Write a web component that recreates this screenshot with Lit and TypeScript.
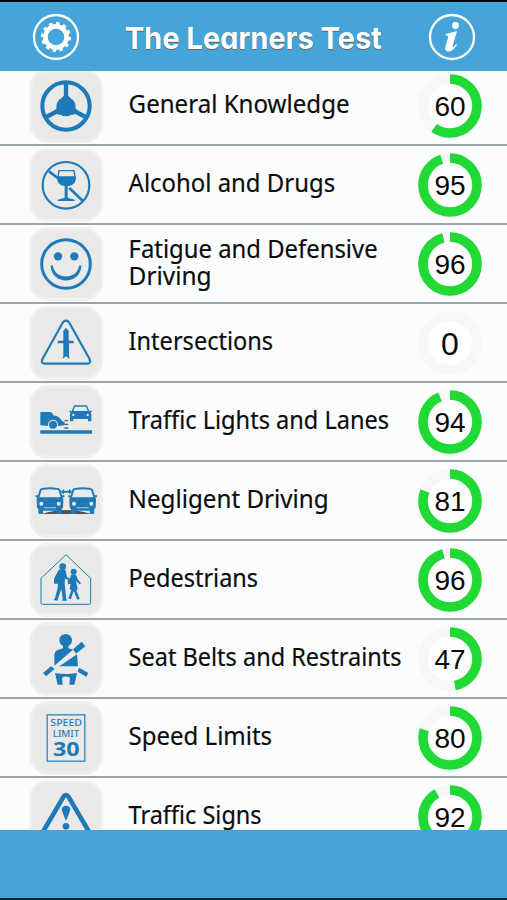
import { LitElement, html, svg, css, SVGTemplateResult } from "lit";
import { customElement, property } from "lit/decorators.js";

interface Line {
  text: string;
  width: number;
}
interface Topic {
  lines: Line[];
  score: number;
  icon: string;
}

const TOPICS: Topic[] = [
  { lines: [{ text: "General Knowledge", width: 221 }], score: 60, icon: "wheel" },
  { lines: [{ text: "Alcohol and Drugs", width: 206.5 }], score: 95, icon: "drink" },
  {
    lines: [
      { text: "Fatigue and Defensive", width: 249 },
      { text: "Driving", width: 83 },
    ],
    score: 96,
    icon: "smile",
  },
  { lines: [{ text: "Intersections", width: 144.5 }], score: 0, icon: "crossing" },
  { lines: [{ text: "Traffic Lights and Lanes", width: 260.5 }], score: 94, icon: "lanes" },
  { lines: [{ text: "Negligent Driving", width: 200 }], score: 81, icon: "cars" },
  { lines: [{ text: "Pedestrians", width: 129.5 }], score: 96, icon: "walkers" },
  { lines: [{ text: "Seat Belts and Restraints", width: 273 }], score: 47, icon: "belt" },
  { lines: [{ text: "Speed Limits", width: 143.5 }], score: 80, icon: "speed" },
  { lines: [{ text: "Traffic Signs", width: 133 }], score: 92, icon: "warning" },
];

const car = (dx: number) => svg`<g transform="translate(${dx} 0)">
  <path class="fill" fill-rule="evenodd" d="M-38 352 L-31 329 Q-29 324 -23 324 Q0 320 23 324 Q29 324 31 329 L38 352 Q40 355 40 360 L39 384 L35 386 L35 399 Q35 402 30 402 L24 402 Q21 402 21 398 L21 392 L-21 392 L-21 398 Q-21 402 -24 402 L-30 402 Q-35 402 -35 399 L-35 386 L-39 384 L-40 360 Q-40 355 -38 352 Z M-32 352 L32 352 L26 332 Q25 329 21 329 Q0 326 -21 329 Q-25 329 -26 332 Z"/>
  <circle class="hole" cx="-26" cy="371" r="6"/><circle class="hole" cx="26" cy="371" r="6"/>
  <path class="fill" d="M-43 346h7v6h-7zM36 346h7v6h-7z"/>
  <path class="gap" d="M-18 383H18"/>
</g>`;

// Every glyph sits on a 222-unit tile whose middle is x = 137, y = cy.
const ICONS: Record<string, { cy: number; art: SVGTemplateResult }> = {
  wheel: {
    cy: 123,
    art: svg`<circle class="ring" cx="137" cy="123" r="71" stroke-width="12"/>
      <path class="line" stroke-width="13" d="M137 54V123M78 156L137 125L196 156"/>
      <circle class="fill" cx="137" cy="125" r="29"/>
      <path class="fill" d="M120 104L130 92H144L154 104L165 130L173 138L164 148Q137 154 110 148L101 138L109 130Z"/>`,
  },
  drink: {
    cy: 360,
    art: svg`<circle class="ring" cx="137" cy="361" r="70" stroke-width="6.5"/>
      <path class="line" stroke-width="8" d="M86 319L112 339M147 369L187 407"/>
      <path class="ring" stroke-width="4" d="M113 337L116 317H161L164 337"/>
      <path class="fill" d="M110 334H167Q169 362 142 364V398L163 404V408H112V404L133 398V364Q108 361 110 334Z"/>`,
  },
  smile: {
    cy: 126,
    art: svg`<circle class="ring" cx="137" cy="126" r="73" stroke-width="9"/>
      <circle class="fill" cx="113" cy="103" r="12.5"/><circle class="fill" cx="162" cy="103" r="12.5"/>
      <path class="fill" d="M91 132Q94 127 98 132C104 174 170 174 176 132Q180 127 183 132C180 190 94 190 91 132Z"/>`,
  },
  crossing: {
    cy: 363,
    art: svg`<path class="ring" stroke-width="6.5" stroke-linejoin="round" d="M127 302Q137 290 147 302L208 412Q213 424 202 425H72Q61 424 66 412Z"/>
      <path class="fill" d="M137 317L147 329H145V356H160V364H146V402L148 411L137 403L127 411L129 402V364H112V356H129V329H127Z"/>`,
  },
  lanes: {
    cy: 126,
    art: svg`<path class="fill" d="M60 151H215V161H60Z"/>
      <path class="fill" d="M60 96H91Q96 97 99 106Q119 110 125 123L133 127V136L110 138H85L60 136Z"/>
      <circle class="hole" cx="98" cy="134" r="15"/><circle class="fill" cx="98" cy="134" r="12"/>
      <path class="dash" d="M138 120V148"/>
      <path class="fill" fill-rule="evenodd" d="M154 94L160 79Q161 76 165 76H196Q200 76 201 79L207 94Q213 97 213 104V124H203V117H159V124H149V104Q149 97 154 94ZM159 93H202L197 80H164Z"/>
      <circle class="hole" cx="159" cy="105" r="3.5"/><circle class="hole" cx="202" cy="105" r="3.5"/>
      <path class="fill" d="M147 92h6v5h-6zM208 92h6v5h-6z"/>`,
  },
  cars: {
    cy: 363,
    art: svg`<path class="road" d="M64 402Q138 378 212 402Z"/>
      ${car(89)}${car(187)}
      <path class="fill" d="M121 335L131 327V332H146V327L156 335L146 343V338H131V343Z"/>`,
  },
  walkers: {
    cy: 126,
    art: svg`<path class="ring" stroke-width="3" d="M137 50L211 121V195Q211 199 207 199H66Q62 199 62 195V121Z"/>
      <circle class="fill" cx="127" cy="86" r="10"/>
      <path class="fill" d="M115 96Q126 91 136 98L140 117L150 122L148 127L134 122L133 138L138 184L140 188H126L127 181L123 152L111 188L100 186L104 181L112 150L113 137H101V123L105 115Z"/>
      <circle class="fill" cx="160" cy="101" r="9"/>
      <path class="fill" d="M152 110Q161 107 168 112L172 124L182 136L178 139L167 129L172 153L168 157L178 183L171 185L160 159L152 183L144 182L153 157L148 153L151 137L143 139L142 127L148 124Z"/>`,
  },
  belt: {
    cy: 363,
    art: svg`<circle class="fill" cx="136" cy="307" r="19"/>
      <path class="fill" d="M128 324H144V331L158 335L102 383V350Q103 340 111 337L128 331Z"/>
      <path class="fill" d="M170 349L173 385H117Z"/>
      <path class="fill" d="M184 311L195 325L167 347L158 334Z"/>
      <path class="fill" d="M92 385L103 393L77 415L68 405Z"/>
      <path class="fill" d="M176 389L204 405L198 416L172 401Z"/>
      <path class="fill" d="M104 405Q137 411 170 405L162 440H147L149 419Q137 412 125 419L127 440H112Z"/>`,
  },
  speed: {
    cy: 129,
    art: svg`<rect class="ring" x="80.500" y="59.500" width="113" height="139" stroke-width="3.5"/>
      <text class="sign" x="90" y="94" font-size="28" textLength="95" lengthAdjust="spacingAndGlyphs">SPEED</text>
      <text class="sign" x="97" y="127" font-size="28" textLength="80" lengthAdjust="spacingAndGlyphs">LIMIT</text>
      <text class="sign bold" x="98" y="184" font-size="61" textLength="80" lengthAdjust="spacingAndGlyphs">30</text>`,
  },
  warning: {
    cy: 366,
    art: svg`<path class="ring" stroke-width="14" stroke-linejoin="round" d="M128 308Q137 293 146 308L214 424H60Z"/>
      <path class="fill" d="M124 343Q125 332 137 332Q149 332 150 343Q148 352 138 376H136Q126 352 124 343Z"/>
      <circle class="fill" cx="137" cy="394" r="10"/>`,
  },
};

@customElement("topic-icon")
export class TopicIcon extends LitElement {
  @property() name = "wheel";

  static styles = css`
    :host { display: block; flex: none; width: 74px; height: 74px; }
    svg { display: block; width: 100%; height: 100%; }
    .edge { fill: #eeefee; }
    .face { fill: #e9e9e8; stroke: #f1f1f0; stroke-width: 2.500; }
    .fill { fill: #1d79b8; }
    .hole { fill: #e9e9e8; }
    .ring { fill: none; stroke: #1d79b8; }
    .line { fill: none; stroke: #1d79b8; }
    .gap { fill: none; stroke: #8dbbd9; stroke-width: 4; }
    .dash { fill: none; stroke: #44647c; stroke-width: 11; stroke-dasharray: 4 7; }
    .road { fill: #56504d; }
    .sign { fill: #1d79b8; font-family: "Noto Sans", sans-serif; font-weight: 500; }
    .bold { font-weight: 700; }
  `;

  render() {
    const { cy, art } = ICONS[this.name];
    const top = cy - 111;
    return html`<svg viewBox="26 ${top} 222 222" aria-hidden="true">
      <rect class="edge" x="27" y=${top + 1} width="220" height="220" rx="54"></rect>
      <rect class="face" x="34" y=${top + 8} width="206" height="205" rx="46"></rect>
      ${art}
    </svg>`;
  }
}

@customElement("score-ring")
export class ScoreRing extends LitElement {
  @property({ type: Number }) value = 0;

  static styles = css`
    :host { display: block; flex: none; width: 64px; height: 64px; }
    svg { display: block; width: 100%; height: 100%; }
    .track { fill: #fefefe; stroke: #f7f7f7; stroke-width: 9.600; }
    .arc { fill: none; stroke: #20d935; stroke-width: 9.600; }
    .num { font: 28px "Liberation Sans", Arial, sans-serif; fill: #0a0a0a; text-anchor: middle; }
    .zero { font-size: 32px; }
  `;

  render() {
    return html`<svg viewBox="0 0 64 64">
      <circle class="track" cx="32" cy="32" r="27"></circle>
      ${this.value > 0
        ? svg`<circle class="arc" cx="32" cy="32" r="27" pathLength="100" transform="rotate(-90 32 32)" stroke-dasharray="${this.value} 100"/>`
        : null}
      <text class="num ${this.value === 0 ? "zero" : ""}" x="32" y=${this.value === 0 ? 43.5 : 42}>${this.value}</text>
    </svg>`;
  }
}

@customElement("app-root")
export class AppRoot extends LitElement {
  static styles = css`
    :host {
      display: flex;
      flex-direction: column;
      box-sizing: border-box;
      height: 900px;
      overflow: hidden;
      border-top: 2px solid #05080b;
      border-bottom: 2px solid #10212c;
      background: #fafcfd;
    }
    .bar {
      flex: none;
      box-sizing: border-box;
      height: 69px;
      display: flex;
      align-items: center;
      justify-content: space-between;
      padding: 0 31px 0 32px;
      background: #46a5d8;
    }
    .button { display: block; width: 48px; height: 48px; }
    .outline { fill: none; stroke: #fff; stroke-width: 2.300; }
    .white { fill: #fff; }
    .cog { fill: none; stroke: #fff; stroke-width: 4.600; }
    .teeth { fill: none; stroke: #fff; stroke-width: 4; stroke-dasharray: 3.400 3.400; }
    .title { width: 262px; height: 48px; overflow: visible; }
    .title-text {
      font: 700 30.500px Inter, "Open Sans", sans-serif;
      font-feature-settings: "cv11", "ss03";
      fill: #fff;
      filter: drop-shadow(0.500px 1.500px 0.500px #6d625c);
    }
    .list { flex: 1; min-height: 0; overflow: hidden; }
    .rows { margin: -4px 0 0; padding: 0; list-style: none; }
    .row {
      box-sizing: border-box;
      height: 79px;
      display: flex;
      align-items: center;
      padding: 1px 25px 0 29px;
      border-bottom: 2px solid #9ba5a8;
    }
    .label { flex: 1; min-width: 0; height: 76px; margin-left: 25px; overflow: visible; }
    .text {
      font: 25.500px "Noto Sans", "Open Sans", sans-serif;
      fill: #0c0c0c;
      stroke: #0c0c0c;
      stroke-width: 0.200;
    }
    .foot { flex: none; height: 68px; background: #46a5d8; }
  `;

  render() {
    return html`
      <header class="bar">
        <svg class="button" viewBox="0 0 48 48" role="img" aria-label="Settings">
          <circle class="outline" cx="24" cy="24" r="22"></circle>
          <circle class="cog" cx="24" cy="24" r="10.600"></circle>
          <circle class="teeth" cx="24" cy="24" r="13" pathLength="81.600"></circle>
        </svg>
        <svg class="title" viewBox="0 0 262 48">
          <text class="title-text" x="2" y="35.500" textLength="257" lengthAdjust="spacingAndGlyphs">The Learners Test</text>
        </svg>
        <svg class="button" viewBox="0 0 48 48" role="img" aria-label="Information">
          <circle class="outline" cx="24" cy="24" r="22"></circle>
          <circle class="white" cx="27.500" cy="12.500" r="3.400"></circle>
          <path class="white" d="M17.500 21Q22.500 19.800 29 18L24.800 32.500Q24.300 35 25.300 34.300Q26.700 33 28 31L29 31.800Q25 38.500 20.500 38.500Q16.500 38 17.300 34.200L20.200 24Q20.700 22 17.500 22.300Z"></path>
        </svg>
      </header>
      <main class="list">
        <ul class="rows">
          ${TOPICS.map(
            (t) => html`<li class="row">
              <topic-icon name=${t.icon}></topic-icon>
              <svg class="label">
                ${t.lines.map(
                  (l, i) => svg`<text class="text" x="0.6" y=${(t.lines.length > 1 ? 31.5 : 45) + i * 27} textLength=${l.width} lengthAdjust="spacingAndGlyphs">${l.text}</text>`
                )}
              </svg>
              <score-ring .value=${t.score}></score-ring>
            </li>`
          )}
        </ul>
      </main>
      <footer class="foot"></footer>
    `;
  }
}
